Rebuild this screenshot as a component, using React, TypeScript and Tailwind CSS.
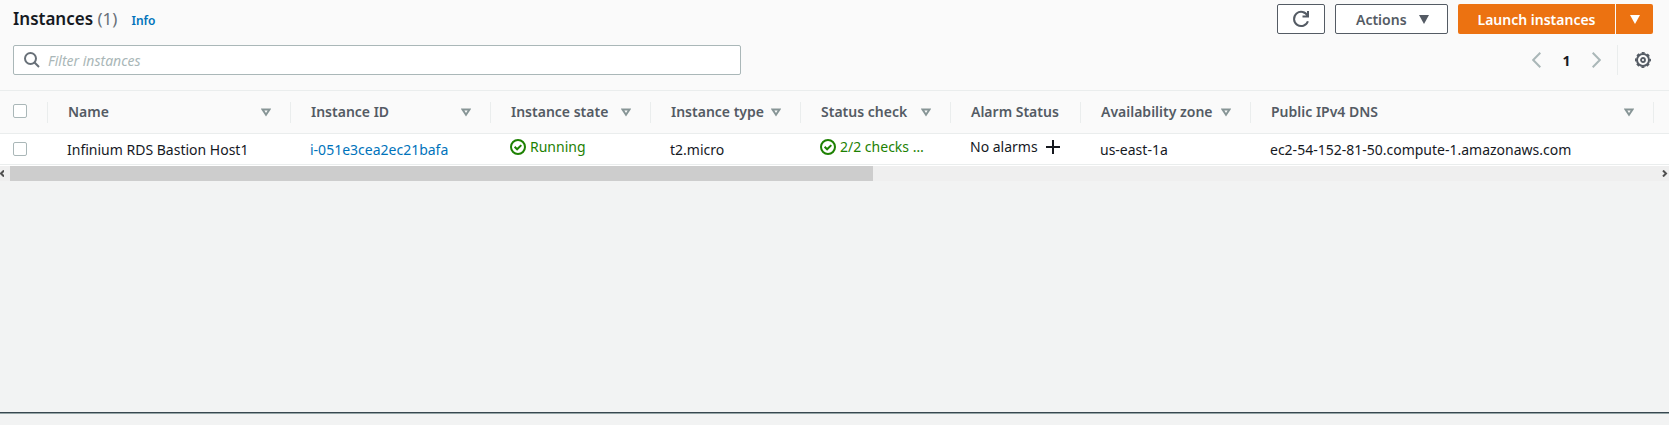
import React from "react";

type Column = { label: string; width: string; sortable: boolean };

const columns: Column[] = [
  { label: "Name", width: "w-[243px]", sortable: true },
  { label: "Instance ID", width: "w-[200px]", sortable: true },
  { label: "Instance state", width: "w-[160px]", sortable: true },
  { label: "Instance type", width: "w-[150px]", sortable: true },
  { label: "Status check", width: "w-[150px]", sortable: true },
  { label: "Alarm Status", width: "w-[130px]", sortable: false },
  { label: "Availability zone", width: "w-[170px]", sortable: true },
  { label: "Public IPv4 DNS", width: "w-auto", sortable: true },
];

function SortIcon() {
  return (
    <svg width="10" height="9" viewBox="0 0 10 9" fill="none" stroke="#879596" strokeWidth="2" aria-hidden="true">
      <path d="M1.5 1.5h7L5 6.8z" />
    </svg>
  );
}

function CaretDown() {
  return (
    <svg width="10" height="9" viewBox="0 0 10 9" fill="currentColor" aria-hidden="true">
      <path d="M0 0h10L5 9z" />
    </svg>
  );
}

function RefreshIcon() {
  return (
    <svg width="18" height="18" viewBox="0 0 18 18" fill="none" stroke="currentColor" strokeWidth="2" aria-hidden="true">
      <path d="M15.9 11.2A7.1 7.1 0 1 1 15.6 6" />
      <path d="M16 1v5.5h-5.5" />
    </svg>
  );
}

function SearchIcon() {
  return (
    <svg width="16" height="16" viewBox="0 0 16 16" fill="none" stroke="#687078" strokeWidth="2" aria-hidden="true">
      <circle cx="6.5" cy="6.5" r="5.5" />
      <path d="M10.3 10.3L15 15" />
    </svg>
  );
}

function Chevron({ direction }: { direction: "left" | "right" }) {
  return (
    <svg width="9" height="16" viewBox="0 0 9 16" fill="none" stroke="#aab7b8" strokeWidth="2" aria-hidden="true">
      <path d={direction === "left" ? "M8.3 .8L1.2 8l7.1 7.2" : "M.7 .8L7.8 8 .7 15.2"} />
    </svg>
  );
}

function GearIcon() {
  return (
    <svg width="16" height="16" viewBox="0 0 16 16" fill="none" stroke="#545b64" aria-hidden="true">
      <circle cx="8" cy="8" r="6" strokeWidth="2" />
      <circle cx="8" cy="8" r="7.2" strokeWidth="1.6" strokeDasharray="3 2.655" strokeDashoffset="1.5" />
      <circle cx="8" cy="8" r="2" strokeWidth="1.8" />
    </svg>
  );
}

function CheckCircle() {
  return (
    <svg width="16" height="16" viewBox="0 0 16 16" fill="none" stroke="currentColor" strokeWidth="2" aria-hidden="true">
      <circle cx="8" cy="8" r="7" />
      <path d="M4.6 7.8l2.5 2.5 4.2-4.2" />
    </svg>
  );
}

function Tick({ label }: { label: string }) {
  return (
    <input
      type="checkbox"
      aria-label={label}
      className="block h-3.5 w-3.5 appearance-none rounded-xs border border-[#aab7b8] bg-white checked:bg-[#0073bb]"
    />
  );
}

function Toolbar() {
  return (
    <header className="bg-[#fafafa] pt-1 pr-4 pb-[15px] pl-[13px]">
      <div className="flex h-[30px] items-center justify-between">
        <div className="flex items-baseline">
          <h1 className="text-[17px] leading-[22px] font-semibold text-[#16191f]">
            Instances <span className="font-normal text-[#687078]">(1)</span>
          </h1>
          <a href="#info" className="ml-[14px] text-[12px] font-semibold text-[#0073bb]">
            Info
          </a>
        </div>
        <div className="flex gap-2.5 text-[14px] font-semibold text-[#545b64]">
          <button
            type="button"
            aria-label="Refresh"
            className="flex h-[30px] w-12 items-center justify-center rounded-xs border border-[#545b64] bg-white"
          >
            <RefreshIcon />
          </button>
          <button
            type="button"
            className="flex h-[30px] w-[113px] items-center justify-between rounded-xs border border-[#545b64] bg-white pr-[18px] pl-5"
          >
            Actions
            <CaretDown />
          </button>
          <div className="flex gap-px text-white">
            <button type="button" className="h-[30px] w-[157px] rounded-l-xs bg-[#ec7211]">
              Launch instances
            </button>
            <button
              type="button"
              aria-label="More launch options"
              className="flex h-[30px] w-[37px] items-center justify-center rounded-r-xs bg-[#ec7211]"
            >
              <CaretDown />
            </button>
          </div>
        </div>
      </div>
      <div className="mt-[11px] flex h-[30px] items-center justify-between">
        <label className="flex h-full w-[728px] items-center gap-2 rounded-xs border border-[#aab7b8] bg-white px-2.5">
          <SearchIcon />
          <input
            type="text"
            aria-label="Filter instances"
            placeholder="Filter instances"
            className="min-w-0 flex-1 text-[14px] text-[#16191f] outline-none placeholder:text-[#aab7b8] placeholder:italic"
          />
        </label>
        <nav aria-label="Pagination" className="flex h-full items-center">
          <button type="button" aria-label="Previous page">
            <Chevron direction="left" />
          </button>
          <button type="button" className="w-[51px] text-[14px] font-bold text-[#16191f]">
            1
          </button>
          <button type="button" aria-label="Next page">
            <Chevron direction="right" />
          </button>
          <button
            type="button"
            aria-label="Preferences"
            className="ml-4 flex h-full items-center border-l border-[#eaeded] pr-0.5 pl-[17px]"
          >
            <GearIcon />
          </button>
        </nav>
      </div>
    </header>
  );
}

function InstanceTable() {
  return (
    <table className="w-full table-fixed border-collapse text-left text-[14px] leading-[18px] whitespace-nowrap text-[#16191f]">
      <thead className="border-y border-[#eaeded] bg-[#fafafa] text-[#545b64]">
        <tr className="h-[43px]">
          <th className="w-12 p-0">
            <div className="flex h-[21px] items-center border-r border-[#eaeded] pb-0.5 pl-[13px]">
              <Tick label="Select all instances" />
            </div>
          </th>
          {columns.map((column) => (
            <th key={column.label} className={`${column.width} p-0 font-semibold`}>
              <div className="flex h-[21px] items-center justify-between border-r border-[#eaeded] pr-[19px] pl-5">
                {column.label}
                {column.sortable && (
                  <button type="button" aria-label={`Sort by ${column.label}`}>
                    <SortIcon />
                  </button>
                )}
              </div>
            </th>
          ))}
          <th className="w-[15px] p-0" />
        </tr>
      </thead>
      <tbody className="border-b border-[#eaeded] bg-white">
        <tr className="h-[31px]">
          <td className="p-0 pl-[13px]">
            <Tick label="Select Infinium RDS Bastion Host1" />
          </td>
          <td className="p-0 pt-0.5 pl-[19px]">Infinium RDS Bastion Host1</td>
          <td className="p-0 pt-0.5 pl-[19px]">
            <a href="#instance" className="text-[#0073bb]">
              i-051e3cea2ec21bafa
            </a>
          </td>
          <td className="p-0 pb-1 pl-[19px]">
            <div className="flex items-center gap-1 text-[#1d8102]">
              <CheckCircle />
              Running
            </div>
          </td>
          <td className="p-0 pt-0.5 pl-[19px]">t2.micro</td>
          <td className="p-0 pb-1 pl-[19px]">
            <div className="flex items-center gap-1 text-[#1d8102]">
              <CheckCircle />
              2/2 checks …
            </div>
          </td>
          <td className="p-0 pb-1 pl-[19px]">
            <div className="flex items-center gap-2">
              No alarms
              <button type="button" aria-label="Create alarm">
                <svg width="14" height="14" viewBox="0 0 14 14" stroke="#16191f" strokeWidth="2" aria-hidden="true">
                  <path d="M7 0v14M0 7h14" />
                </svg>
              </button>
            </div>
          </td>
          <td className="p-0 pt-0.5 pl-[19px]">us-east-1a</td>
          <td className="p-0 pt-0.5 pl-[19px]">ec2-54-152-81-50.compute-1.amazonaws.com</td>
          <td className="p-0" />
        </tr>
      </tbody>
    </table>
  );
}

function ScrollTrack() {
  return (
    <div className="flex border-t border-white bg-[#efefef] text-[#505050]">
      <div className="flex h-[15px] w-2.5 items-center">
        <svg width="4" height="7" viewBox="0 0 4 7" fill="none" stroke="currentColor" strokeWidth="2" aria-hidden="true">
          <path d="M4 .5L1 3.5l3 3" />
        </svg>
      </div>
      <div className="flex-1">
        <div className="h-[15px] w-[calc(100%*10/19)] bg-[#cdcdcd]" />
      </div>
      <div className="flex h-[15px] w-5 items-center justify-end pr-px">
        <svg width="6" height="7" viewBox="0 0 6 7" fill="none" stroke="currentColor" strokeWidth="2" aria-hidden="true">
          <path d="M1 .5l3 3-3 3" />
        </svg>
      </div>
    </div>
  );
}

export default function App() {
  return (
    <div className="flex min-h-screen flex-col bg-[#f2f3f3] font-['Noto_Sans','Open_Sans',sans-serif]">
      <main className="flex-1">
        <Toolbar />
        <InstanceTable />
        <ScrollTrack />
      </main>
      <footer className="border-t border-[#37474f]">
        <div className="h-3 border-t border-[#95a5a6]" />
      </footer>
    </div>
  );
}
